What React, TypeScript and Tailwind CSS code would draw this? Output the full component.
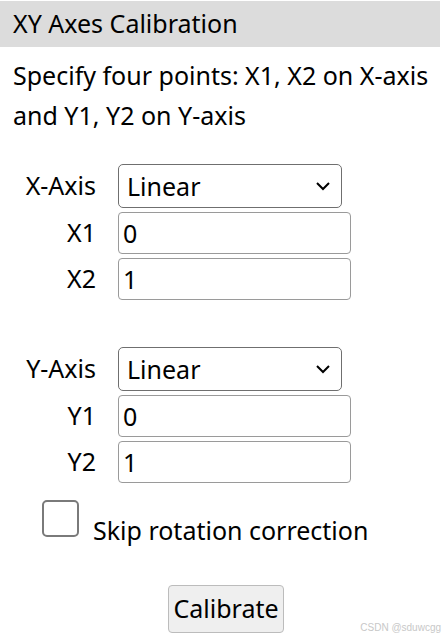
import React from "react";

function Chevron() {
  return (
    <svg width="16" height="10" viewBox="0 0 16 10" className="shrink-0">
      <polyline points="2,2 8,8 14,2" fill="none" stroke="#000" strokeWidth="2" />
    </svg>
  );
}

function SelectBox() {
  return (
    <div className="w-[224px] h-[44px] border border-[#6f6f6f] rounded-[5px] bg-white flex items-center justify-between pl-[8px] pr-[10px]">
      <span className="leading-none">Linear</span>
      <Chevron />
    </div>
  );
}

function InputBox({ value }: { value: string }) {
  return (
    <div className="w-[233px] h-[42px] border border-[#9a9a9a] rounded-[4px] bg-white flex items-center pl-[4px]">
      <span className="leading-none">{value}</span>
    </div>
  );
}

function AxisGroup({ axis, a, b }: { axis: string; a: string; b: string }) {
  return (
    <div className="grid grid-cols-[96px_auto] gap-x-[22px] gap-y-[4px] items-center">
      <div className="text-right">{axis}-Axis</div>
      <SelectBox />
      <div className="text-right">{a}</div>
      <InputBox value="0" />
      <div className="text-right">{b}</div>
      <InputBox value="1" />
    </div>
  );
}

export default function App() {
  return (
    <div
      className="relative w-[447px] h-[641px] bg-white text-black text-[25px] overflow-hidden"
      style={{ fontFamily: '"Noto Sans", "Open Sans", sans-serif' }}
    >
      <div className="mt-[1px] w-[440px] h-[46px] bg-[#dcdcdc] pl-[13px] flex items-center">
        XY Axes Calibration
      </div>
      <p className="px-[13px] mt-[8px] leading-[40px]">
        Specify four points: X1, X2 on X-axis and Y1, Y2 on Y-axis
      </p>
      <div className="mt-[29px]">
        <AxisGroup axis="X" a="X1" b="X2" />
      </div>
      <div className="mt-[47px]">
        <AxisGroup axis="Y" a="Y1" b="Y2" />
      </div>
      <div className="mt-[17px] pl-[42px] flex items-end gap-[14px]">
        <div className="w-[37px] h-[37px] border-2 border-[#7a7a7a] rounded-[5px] bg-white shrink-0" />
        <span className="leading-none translate-y-[6px]">Skip rotation correction</span>
      </div>
      <div className="mt-[48px] flex pl-[168px]">
        <div className="w-[116px] h-[48px] bg-[#efefef] border border-[#bcbcbc] rounded-[4px] flex items-center justify-center">
          Calibrate
        </div>
      </div>
      <div
        className="absolute right-[6px] bottom-[6px] text-[10px] text-[#c8c8c8]"
        style={{ fontFamily: '"Liberation Sans", Arial, sans-serif' }}
      >
        CSDN @sduwcgg
      </div>
    </div>
  );
}
